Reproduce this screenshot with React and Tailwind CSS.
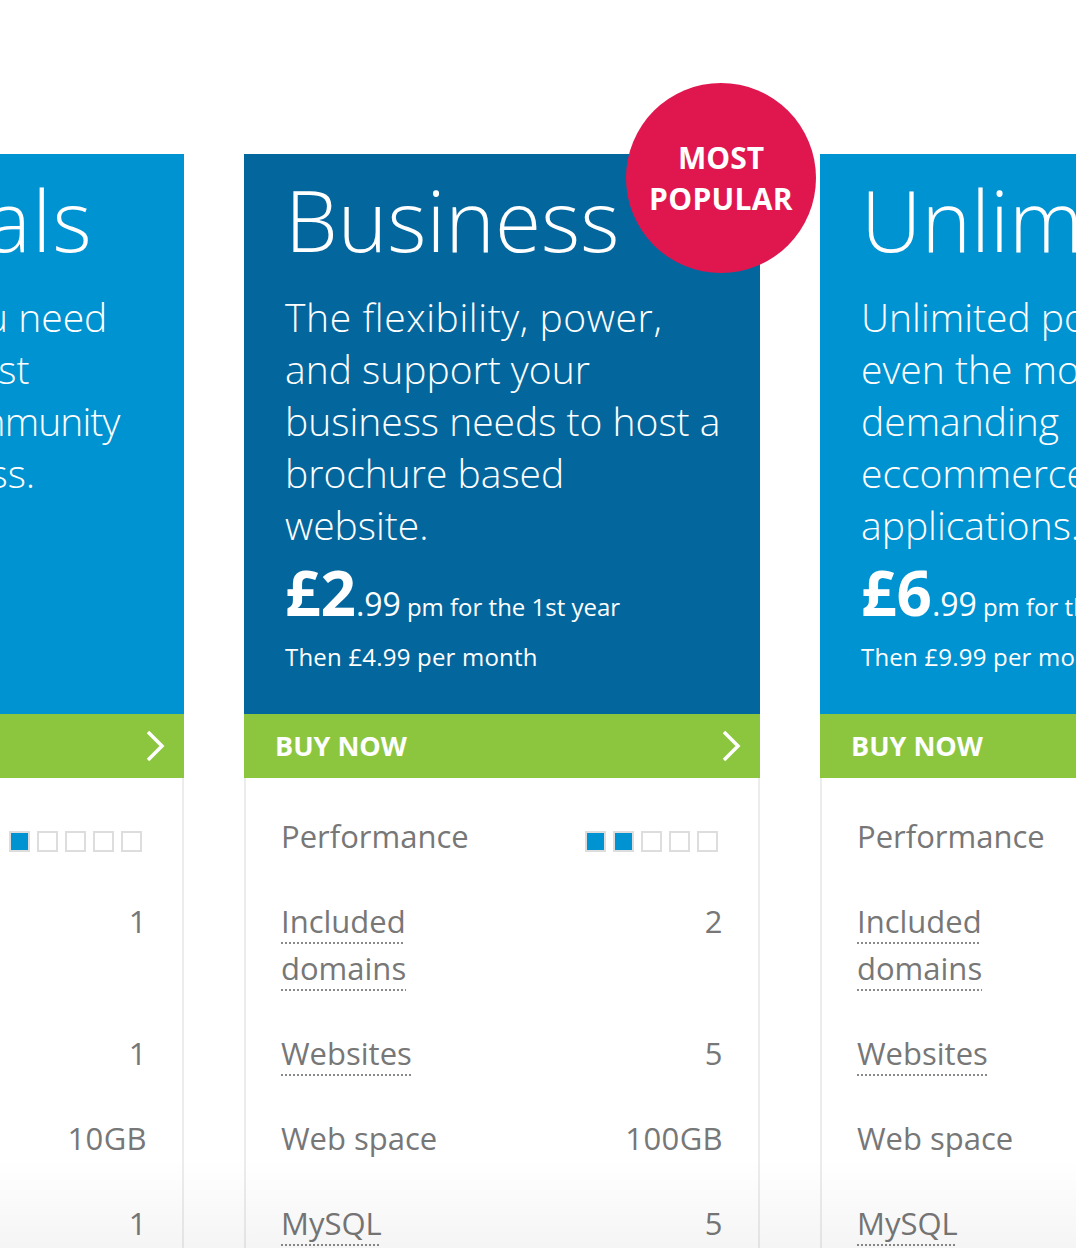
import React from 'react';

const plans = [
  {
    name: 'Essentials',
    titleTrack: 'tracking-[1.4px]',
    color: 'bg-[#0093d1]',
    lines: [
      ['All the things you need', ''],
      ['to create and host', ''],
      ['a website for community', 'tracking-[-0.9px]'],
      ['group or business.', ''],
    ],
    pounds: '1',
    suffix: 'pm',
    then: '£2.99',
    perf: 1,
    domains: '1',
    websites: '1',
    space: '10GB',
    mysql: '1',
  },
  {
    name: 'Business',
    titleTrack: 'tracking-normal',
    color: 'bg-[#03679e]',
    popular: true,
    lines: [
      ['The flexibility, power,', 'tracking-[0.6px]'],
      ['and support your', ''],
      ['business needs to host a', ''],
      ['brochure based', ''],
      ['website.', ''],
    ],
    pounds: '2',
    suffix: 'pm for the 1st year',
    then: '£4.99',
    perf: 2,
    domains: '2',
    websites: '5',
    space: '100GB',
    mysql: '5',
  },
  {
    name: 'Unlimited',
    titleTrack: 'tracking-normal',
    color: 'bg-[#0093d1]',
    lines: [
      ['Unlimited power for', ''],
      ['even the most', ''],
      ['demanding', ''],
      ['eccommerce', ''],
      ['applications.', ''],
    ],
    pounds: '6',
    suffix: 'pm for the 1st year',
    then: '£9.99',
    perf: 5,
    domains: '10',
    websites: 'Unlimited',
    space: 'Unlimited',
    mysql: 'Unlimited',
  },
];

const Chevron = () => (
  <svg width="20" height="32" viewBox="0 0 20 32" fill="none" stroke="white" strokeWidth="3.5">
    <path d="M3 2 L17 16 L3 30" />
  </svg>
);

const Dotted = ({ children }) => (
  <span className="underline decoration-dotted decoration-2 decoration-[#8a8a8a] underline-offset-[9px]">
    {children}
  </span>
);

const Row = ({ label, value, dotted }) => (
  <div className="flex justify-between items-start py-[19px] leading-[47px]">
    <div className="max-w-[160px]">{dotted ? <Dotted>{label}</Dotted> : label}</div>
    <div className="text-right tracking-[0.4px]">{value}</div>
  </div>
);

const Card = ({ plan }) => (
  <div className="relative w-[516px] shrink-0">
    {plan.popular && (
      <div className="absolute left-[382px] top-[-71px] z-10 flex h-[190px] w-[190px] flex-col items-center justify-center rounded-full bg-[#e0174f] text-[30px] font-bold leading-[41px] text-white">
        <span className="-mt-[1px]">MOST</span>
        <span className="tracking-[0.3px]">POPULAR</span>
      </div>
    )}
    <div className={`${plan.color} flex h-[560px] flex-col px-[41px] pt-[24px] pb-[42px] text-white`}>
      <h2 className={`text-[84px] font-light leading-none ${plan.titleTrack}`}>{plan.name}</h2>
      <p className="mt-[29px] text-[39px] font-light leading-[52px]">
        {plan.lines.map(([l, t], i) => (
          <span key={i} className={`block whitespace-nowrap ${t}`}>{l}</span>
        ))}
      </p>
      <div className="mt-auto">
        <div className="flex items-baseline whitespace-nowrap">
          <span className="text-[62px] font-bold leading-none">£{plan.pounds}</span>
          <span className="text-[32px] leading-none">.99</span>
          <span className="ml-[6px] text-[24px] leading-none">{plan.suffix}</span>
        </div>
        <div className="mt-[19px] whitespace-nowrap text-[24px] leading-[30px] tracking-[0.2px]">Then {plan.then} per month</div>
      </div>
    </div>
    <div className="flex h-16 items-center justify-between bg-[#8cc63f] pl-[31px] pr-[19px] text-white">
      <span className="text-[27px] font-bold">BUY NOW</span>
      <Chevron />
    </div>
    <div className="border-x-2 border-[#ececec] px-[35px] pt-[16px] text-[31px] text-[#777]">
      <div className="flex justify-between items-start py-[19px] leading-[47px]">
        <div>Performance</div>
        <div className="mt-[18px] mr-[5px] flex gap-[7px]">
          {[1, 2, 3, 4, 5].map((n) => (
            <div
              key={n}
              className={`h-[21px] w-[21px] border-2 border-[#dddddd] ${n <= plan.perf ? 'bg-[#0093d1]' : 'bg-white'}`}
            />
          ))}
        </div>
      </div>
      <Row label="Included domains" value={plan.domains} dotted />
      <Row label="Websites" value={plan.websites} dotted />
      <Row label="Web space" value={plan.space} />
      <Row label="MySQL" value={plan.mysql} dotted />
      <Row label="Email accounts" value="Unlimited" dotted />
    </div>
  </div>
);

export default function App() {
  return (
    <div className="relative h-[1248px] overflow-hidden bg-white font-['Open_Sans',sans-serif]">
      <div className="ml-[-332px] flex gap-[60px] pt-[154px]">
        {plans.map((p) => (
          <Card key={p.name} plan={p} />
        ))}
      </div>
      <div className="pointer-events-none absolute inset-x-0 bottom-0 h-[90px] bg-linear-to-b from-transparent to-black/[0.04]" />
    </div>
  );
}
